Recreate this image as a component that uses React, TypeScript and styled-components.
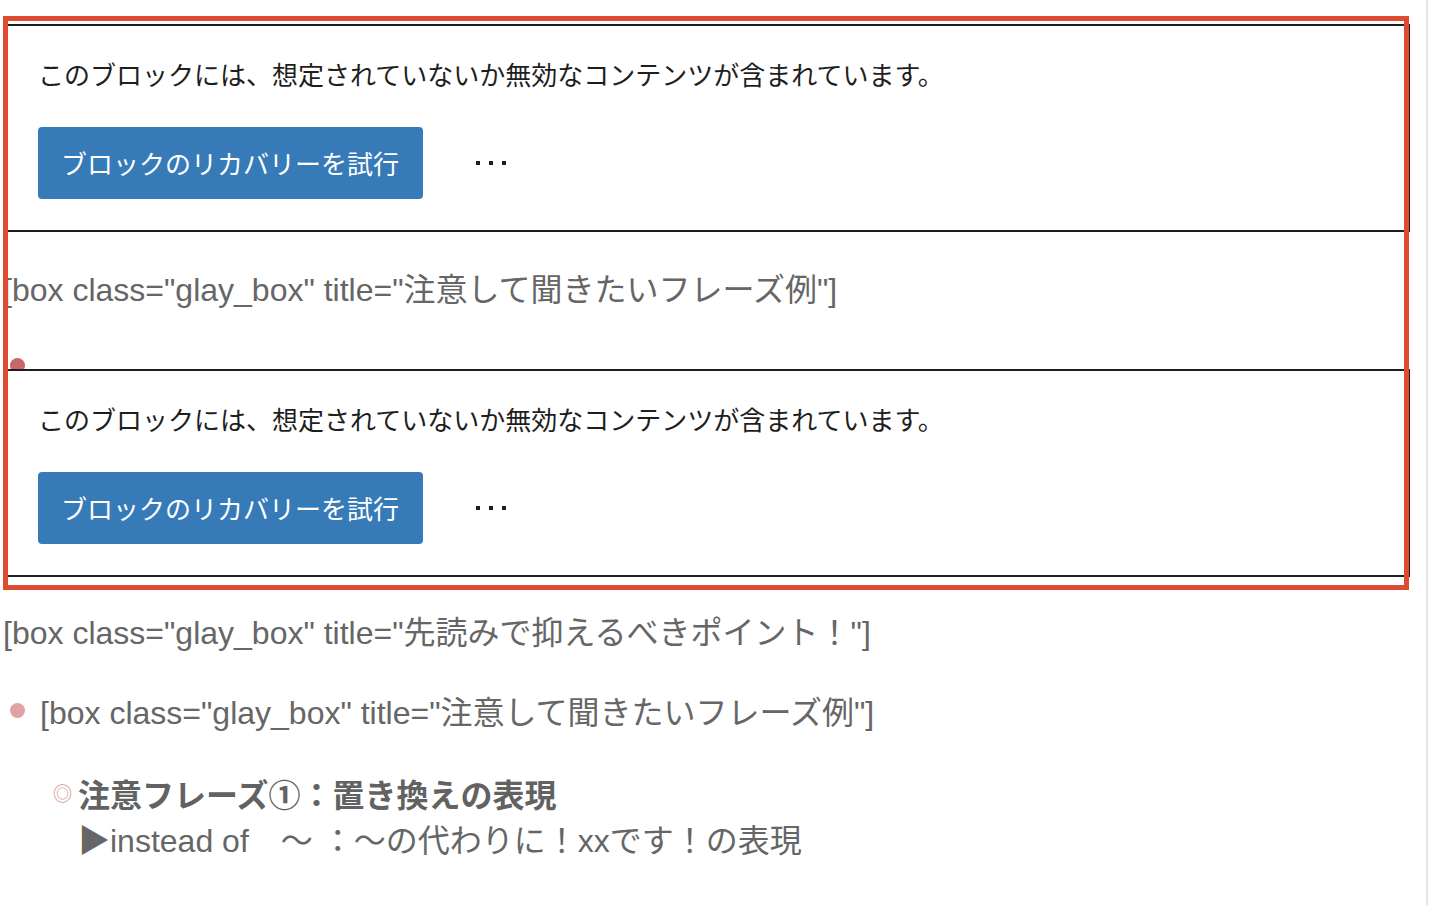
import { FC } from 'react';
import styled, { createGlobalStyle } from 'styled-components';

const GlobalStyle = createGlobalStyle`
  html, body {
    margin: 0;
    padding: 0;
    background: #ffffff;
    overflow: hidden;
  }
`;

const Page = styled.div`
  display: flex;
  width: 1448px;
  height: 905px;
  overflow: hidden;
  background: #ffffff;
`;

const Column = styled.div`
  box-sizing: border-box;
  width: 1428px;
  height: 905px;
  padding: 24px 16px 0 3px;
  border-right: 2px solid #e3e3e3;
  font-family: 'Liberation Sans', 'Noto Sans CJK JP', sans-serif;
  color: #666666;
`;

// the red annotation frame drawn over the editor blocks
const Highlighted = styled.div`
  position: relative;
  &::after {
    content: '';
    position: absolute;
    top: -8px;
    left: 0;
    right: 1px;
    bottom: -13px;
    border: 5px solid #de4b30;
    pointer-events: none;
  }
`;

const WarningBox = styled.div`
  box-sizing: border-box;
  height: 208px;
  margin-left: 3px;
  padding: 30px 32px 32px 30px;
  border: 2px solid #1e1e1e;
  background: #ffffff;
  font-family: 'Noto Sans CJK JP', sans-serif;
`;

const WarningMessage = styled.p`
  margin: 0 0 35px;
  font-size: 26px;
  line-height: 36px;
  color: #1e1e1e;
`;

const Actions = styled.div`
  display: flex;
  align-items: center;
`;

const PrimaryButton = styled.button`
  height: 72px;
  padding: 0 24px 0 23px;
  border: none;
  border-radius: 4px;
  background: #377ab8;
  color: #ffffff;
  font-family: 'Noto Sans CJK JP', sans-serif;
  font-size: 26px;
  line-height: 72px;
  cursor: pointer;
`;

const MoreButton = styled.button`
  display: flex;
  align-items: center;
  justify-content: center;
  width: 72px;
  height: 72px;
  margin-left: 32px;
  padding: 0;
  border: none;
  background: transparent;
  cursor: pointer;
`;

const EditorGap = styled.div`
  padding-top: 34px;
`;

const Shortcode = styled.p<{ $top?: number }>`
  margin: ${(p) => p.$top ?? 0}px 0 0;
  font-size: 32px;
  line-height: 48px;
  white-space: nowrap;
`;

const PeekClip = styled.div`
  height: 11px;
  margin-top: 44px;
  margin-left: 7px;
  overflow: hidden;
`;

const Dot = styled.span<{ $color: string }>`
  display: block;
  width: 15px;
  height: 15px;
  border-radius: 50%;
  background: ${(p) => p.$color};
`;

const BulletRow = styled.div`
  display: flex;
  align-items: flex-start;
  gap: 15px;
  margin-top: 32px;
  padding-left: 7px;
`;

const BulletHolder = styled.div`
  padding-top: 14px;
`;

const SubItem = styled.div`
  display: flex;
  align-items: flex-start;
  gap: 7px;
  margin-top: 32px;
  padding-left: 50px;
`;

const Marker = styled.span`
  width: 18px;
  font-family: 'Noto Sans CJK JP', sans-serif;
  font-size: 19px;
  line-height: 48px;
  color: #d49494;
`;

const SubContent = styled.div`
  font-size: 32px;
  line-height: 48px;
  white-space: nowrap;
`;

const SubHeading = styled.div`
  font-family: 'Noto Sans CJK JP', sans-serif;
  font-weight: 700;
  color: #626262;
`;

const SubBody = styled.div`
  color: #666666;
`;

const MoreIcon: FC = () => (
  <svg width="30" height="4" viewBox="0 0 30 4">
    <rect x="0" y="0" width="4" height="4" fill="#1e1e1e" />
    <rect x="13" y="0" width="4" height="4" fill="#1e1e1e" />
    <rect x="26" y="0" width="4" height="4" fill="#1e1e1e" />
  </svg>
);

const BlockWarning: FC = () => (
  <WarningBox>
    <WarningMessage>
      このブロックには、想定されていないか無効なコンテンツが含まれています。
    </WarningMessage>
    <Actions>
      <PrimaryButton>ブロックのリカバリーを試行</PrimaryButton>
      <MoreButton aria-label="その他">
        <MoreIcon />
      </MoreButton>
    </Actions>
  </WarningBox>
);

const App: FC = () => {
  return (
    <Page>
      <GlobalStyle />
      <Column>
        <Highlighted>
          <BlockWarning />
          <EditorGap>
            <Shortcode>[box class="glay_box" title="注意して聞きたいフレーズ例"]</Shortcode>
            <PeekClip>
              <Dot $color="#c96666" />
            </PeekClip>
          </EditorGap>
          <BlockWarning />
        </Highlighted>

        <Shortcode $top={32}>
          [box class="glay_box" title="先読みで抑えるべきポイント！"]
        </Shortcode>

        <BulletRow>
          <BulletHolder>
            <Dot $color="#e0a2a2" />
          </BulletHolder>
          <Shortcode>[box class="glay_box" title="注意して聞きたいフレーズ例"]</Shortcode>
        </BulletRow>

        <SubItem>
          <Marker>◎</Marker>
          <SubContent>
            <SubHeading>注意フレーズ①：置き換えの表現</SubHeading>
            <SubBody>▶instead of　～ ：～の代わりに！xxです！の表現</SubBody>
          </SubContent>
        </SubItem>
      </Column>
    </Page>
  );
};

export default App;
